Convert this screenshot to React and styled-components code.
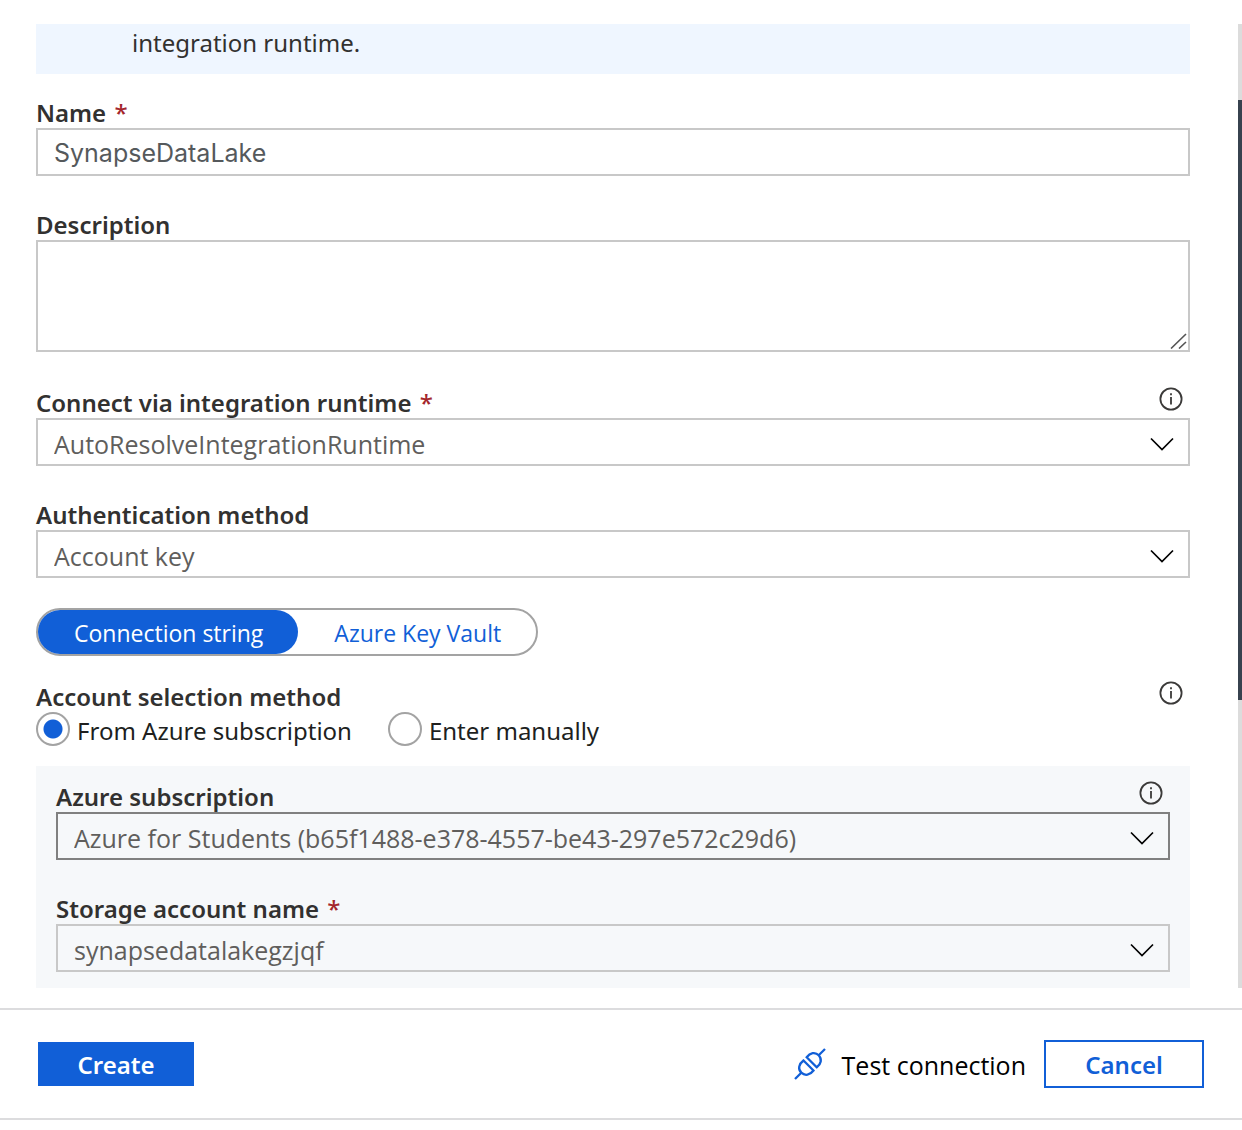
import React, { useState } from "react";
import styled, { createGlobalStyle } from "styled-components";

const BLUE = "#115fd7";

const GlobalStyle = createGlobalStyle`
  * { box-sizing: border-box; }
  body { margin: 0; background: #fff; }
  body, button, select, textarea {
    font-family: "Noto Sans", "Open Sans", sans-serif;
    font-size: 24px;
    line-height: 32px;
    color: #323130;
  }
`;

const Page = styled.div`
  padding-top: 24px;
`;

const ScrollArea = styled.div`
  display: flex;
`;

const Form = styled.form`
  flex: 1;
  min-width: 0;
  padding: 0 48px 0 36px;
`;

const Track = styled.div`
  width: 4px;
  padding-top: 76px;
  background: #dcdcdc;
`;

const Thumb = styled.div`
  height: 600px;
  background: #37424f;
`;

const Notice = styled.div`
  padding: 3px 24px 15px 96px;
  margin-bottom: 22px;
  background: #eff6ff;
`;

const Field = styled.div`
  margin-bottom: ${(p) => p.$gap ?? 32}px;
`;

const LabelRow = styled.div`
  display: flex;
  justify-content: space-between;
  height: 32px;
  padding-right: 6px;
`;

const Label = styled.label`
  padding-top: 1px;
  font-weight: 600;
`;

const Required = styled.span`
  margin-left: 2px;
  font-weight: 500;
  color: #a4262c;
`;

const InfoButton = styled.button`
  display: flex;
  width: 26px;
  height: 26px;
  padding: 0;
  border: 0;
  background: none;
  cursor: pointer;
`;

const Stack = styled.div`
  display: grid;
  > * { grid-area: 1 / 1; }
`;

const TextInput = styled.input`
  display: block;
  width: 100%;
  height: 48px;
  padding: 2px 16px 0;
  border: 2px solid #c8c8c8;
  border-radius: 0;
  background: transparent;
  font-family: Inter, sans-serif;
  font-size: 25px;
  color: #55595c;
`;

const TextArea = styled.textarea`
  display: block;
  width: 100%;
  height: 112px;
  padding: 6px 16px;
  border: 2px solid #c8c8c8;
  border-radius: 0;
  background: transparent;
  resize: none;
`;

const Grip = styled.svg`
  place-self: end;
  margin: 3px;
  pointer-events: none;
`;

const Select = styled.select`
  width: 100%;
  height: 48px;
  padding: 4px 60px 0 16px;
  border: 2px solid ${(p) => (p.$strong ? "#808080" : "#c8c8c8")};
  border-radius: 0;
  background: transparent;
  appearance: none;
  font-family: "Open Sans", sans-serif;
  font-size: 25px;
  color: #605e5c;
`;

const ChevronIcon = styled.svg`
  place-self: center end;
  margin: 4px 16px 0 0;
  pointer-events: none;
`;

const Toggle = styled.div`
  display: flex;
  width: fit-content;
  margin: -2px 0 24px;
  border: 2px solid #a3a3a3;
  border-radius: 24px;
`;

const ToggleButton = styled.button`
  height: 44px;
  padding: 2px 35px 0 36px;
  border: 0;
  border-radius: 22px;
  background: ${(p) => (p.$active ? BLUE : "transparent")};
  color: ${(p) => (p.$active ? "#fff" : BLUE)};
  font-family: "Open Sans", sans-serif;
  font-size: 23px;
  white-space: nowrap;
  cursor: pointer;
`;

const RadioRow = styled.div`
  display: flex;
  gap: 36px;
  margin-bottom: 20px;
`;

const RadioLabel = styled.label`
  display: flex;
  align-items: center;
  gap: 7px;
  height: 34px;
  color: #201f1e;
`;

const Radio = styled.input`
  width: 34px;
  height: 34px;
  margin: 0;
  border: 2px solid #a3a3a3;
  border-radius: 50%;
  background: #fff;
  appearance: none;
  &:checked {
    background: radial-gradient(circle, ${BLUE} 9px, #fff 10px);
  }
`;

const RadioText = styled.span`
  padding-top: 3px;
`;

const Panel = styled.div`
  padding: 14px 20px 16px;
  background: #f6f8fa;
`;

const Footer = styled.footer`
  display: flex;
  align-items: center;
  height: 112px;
  margin-top: 20px;
  padding: 0 38px;
  border-top: 2px solid #dcdcde;
  border-bottom: 2px solid #dcdcde;
`;

const PrimaryButton = styled.button`
  width: 156px;
  height: 44px;
  margin-right: auto;
  padding: 2px 0 0;
  border: 0;
  background: ${BLUE};
  color: #fff;
  font-weight: 600;
`;

const TestButton = styled.button`
  display: flex;
  align-items: center;
  gap: 16px;
  margin-right: 18px;
  padding: 0;
  border: 0;
  background: none;
  font-family: "Open Sans", sans-serif;
  font-size: 25px;
  color: #000;
`;

const TestText = styled.span`
  padding-top: 2px;
`;

const CancelButton = styled.button`
  width: 160px;
  height: 48px;
  padding: 2px 0 0;
  border: 2px solid ${BLUE};
  background: #fff;
  color: ${BLUE};
  font-weight: 600;
`;

function Info({ about }) {
  return (
    <InfoButton type="button" aria-label={`About ${about}`}>
      <svg width="26" height="26" viewBox="0 0 26 26" fill="none" stroke="#3b3a39">
        <circle cx="13" cy="13" r="10.6" strokeWidth="1.8" />
        <path d="M13 11v7.5M13 7.2v2" strokeWidth="1.8" />
      </svg>
    </InfoButton>
  );
}

function FieldLabel({ id, text, required, info }) {
  return (
    <LabelRow>
      <Label htmlFor={id}>
        {text} {required && <Required>*</Required>}
      </Label>
      {info && <Info about={text} />}
    </LabelRow>
  );
}

function SelectField({ id, label, value, required, info, strong, gap }) {
  return (
    <Field $gap={gap}>
      <FieldLabel id={id} text={label} required={required} info={info} />
      <Stack>
        <Select id={id} $strong={strong} defaultValue={value}>
          <option>{value}</option>
        </Select>
        <ChevronIcon width="24" height="14" viewBox="0 0 24 14" fill="none" stroke="#000" strokeWidth="1.7">
          <path d="M1 1.5l11 11 11-11" />
        </ChevronIcon>
      </Stack>
    </Field>
  );
}

export default function App() {
  const [source, setSource] = useState("Connection string");
  const [method, setMethod] = useState("From Azure subscription");

  return (
    <Page>
      <GlobalStyle />
      <ScrollArea>
        <Form id="linked-service" onSubmit={(e) => e.preventDefault()}>
          <Notice>integration runtime.</Notice>
          <Field>
            <FieldLabel id="name" text="Name" required />
            <TextInput id="name" defaultValue="SynapseDataLake" />
          </Field>
          <Field $gap={34}>
            <FieldLabel id="description" text="Description" />
            <Stack>
              <TextArea id="description" />
              <Grip width="17" height="17" viewBox="0 0 17 17" fill="none" stroke="#555" strokeWidth="1.6">
                <path d="M1 16.5L16 2M9 16.5l7-6.500" />
              </Grip>
            </Stack>
          </Field>
          <SelectField id="runtime" label="Connect via integration runtime" value="AutoResolveIntegrationRuntime" required info />
          <SelectField id="auth" label="Authentication method" value="Account key" />
          <Toggle>
            {["Connection string", "Azure Key Vault"].map((t) => (
              <ToggleButton key={t} type="button" $active={source === t} aria-pressed={source === t} onClick={() => setSource(t)}>
                {t}
              </ToggleButton>
            ))}
          </Toggle>
          <LabelRow>
            <Label as="span" id="method">Account selection method</Label>
            <Info about="Account selection method" />
          </LabelRow>
          <RadioRow role="radiogroup" aria-labelledby="method">
            {["From Azure subscription", "Enter manually"].map((t) => (
              <RadioLabel key={t}>
                <Radio type="radio" name="method" checked={method === t} onChange={() => setMethod(t)} />
                <RadioText>{t}</RadioText>
              </RadioLabel>
            ))}
          </RadioRow>
          <Panel>
            <SelectField id="subscription" label="Azure subscription" value="Azure for Students (b65f1488-e378-4557-be43-297e572c29d6)" info strong />
            <SelectField id="storage" label="Storage account name" value="synapsedatalakegzjqf" required gap={0} />
          </Panel>
        </Form>
        <Track>
          <Thumb />
        </Track>
      </ScrollArea>
      <Footer>
        <PrimaryButton type="submit" form="linked-service">Create</PrimaryButton>
        <TestButton type="button">
          <svg width="32" height="32" viewBox="0 0 32 32" fill="none" stroke={BLUE} strokeWidth="2.3" aria-hidden="true">
            <path d="M1 31l6.300-6.300M24.700 7.300L31 1" />
            <path d="M9.500 12.500L19.500 22.500C16 27.200 11 28.200 7.300 24.700S4.800 16 9.500 12.500z" />
            <path d="M12.700 9.300L22.700 19.300C27.200 16 28.200 11 24.700 7.300S16 4.800 12.700 9.300z" />
          </svg>
          <TestText>Test connection</TestText>
        </TestButton>
        <CancelButton type="button">Cancel</CancelButton>
      </Footer>
    </Page>
  );
}
